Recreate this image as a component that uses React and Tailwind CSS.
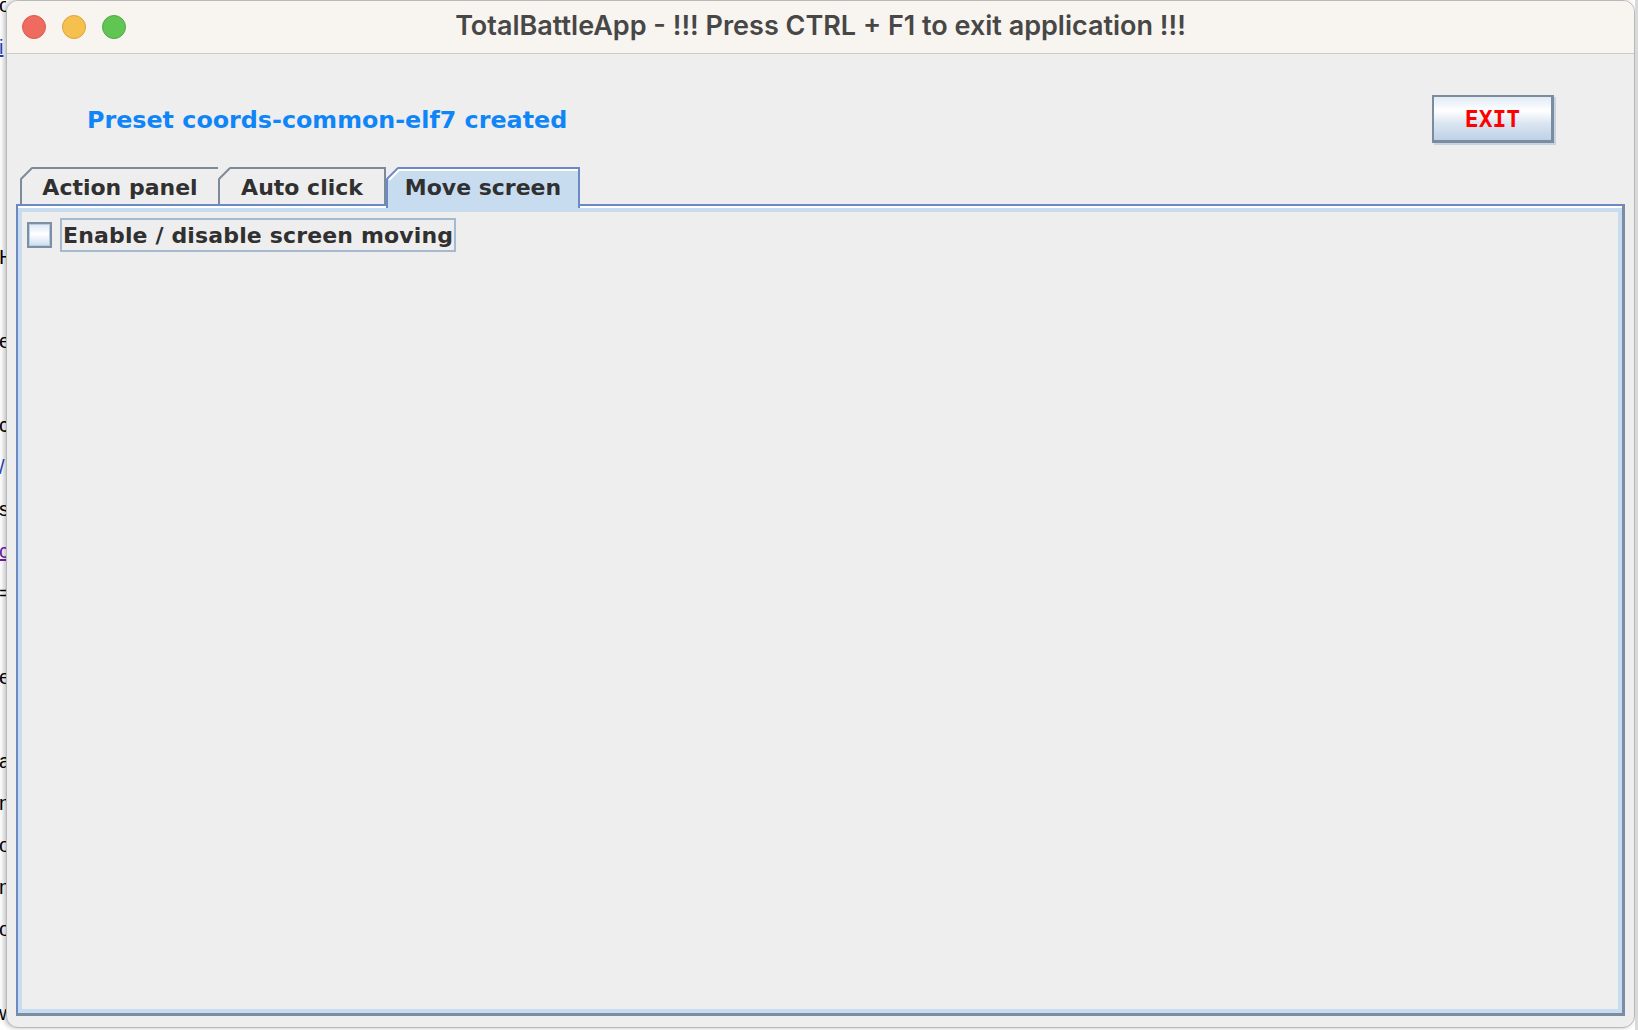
import React from 'react';

const BACK_LINES = [
  { t: 'oc' },
  { t: 'i', c: 'text-[#1a3fb0] underline' },
  {}, {}, {}, {},
  { t: 'H' },
  {},
  { t: 'e' },
  {},
  { t: 'c' },
  { t: '/', c: 'text-[#1a3fb0]' },
  { t: 's' },
  { t: 'c', c: 'text-[#6a1b9a] underline' },
  { t: '=' },
  {},
  { t: 'e' },
  {},
  { t: 'a' },
  { t: 'n' },
  { t: 'o' },
  { t: 'n' },
  { t: 'o' },
  {},
  { t: 'w' },
];

const sans = { fontFamily: '"DejaVu Sans", Verdana, sans-serif' };

// top-left chamfer drawn over the tab corner
const Chamfer = ({ stroke, inner }) => (
  <svg className="absolute -left-[2px] -top-[2px]" width="14" height="14" viewBox="0 0 14 14">
    <polygon points="0,0 12,0 0,12" fill="#eeeeee" />
    <line x1="1" y1="12" x2="12" y2="1" stroke={stroke} strokeWidth="2" />
    {inner && <line x1="3" y1="13" x2="13" y2="3" stroke="#ffffff" strokeWidth="2" />}
  </svg>
);

const Tab = ({ label, width, selected }) => {
  if (selected) {
    return (
      <div
        className={`relative z-10 -mb-[4px] flex h-[41px] flex-col border-2 border-b-0 border-[#6b8ac4] bg-[#c8dcf0] ${width}`}
      >
        <Chamfer stroke="#6b8ac4" inner />
        <div className="flex flex-1 items-start justify-center border-t-2 border-white pt-[4px] text-[22px] font-bold leading-[26px] text-[#303030]">
          {label}
        </div>
      </div>
    );
  }
  return (
    <div
      className={`relative flex h-[37px] items-start justify-center border-2 border-b-0 border-[#7d8a99] bg-[#eeeeee] pt-[6px] text-[22px] font-bold leading-[26px] text-[#303030] ${width}`}
    >
      <Chamfer stroke="#7d8a99" />
      {label}
    </div>
  );
};

export default function App() {
  return (
    <div className="flex h-[1030px] w-[1638px] overflow-hidden bg-white">
      {/* page behind the window */}
      <div
        className="relative h-[1030px] w-[6px] shrink-0 overflow-hidden text-[20px] text-black"
        style={{ fontFamily: '"Liberation Sans", Arial, sans-serif' }}
      >
        <div className="-mt-[16px] flex flex-col">
          {BACK_LINES.map((l, i) => (
            <div key={i} className={`h-[42px] -ml-[1px] whitespace-nowrap leading-[42px] ${l.c || ''}`}>
              {l.t || '\u00a0'}
            </div>
          ))}
        </div>
      </div>

      {/* window */}
      <div className="flex h-[1028px] w-[1629px] shrink-0 flex-col overflow-hidden rounded-[12px] border border-[#b9b9b9] bg-[#eeeeee] shadow-[-2px_0_5px_rgba(0,0,0,0.25)]">
        <div className="grid h-[53px] shrink-0 grid-cols-[1fr_auto_1fr] items-center border-b border-[#cfcbc6] bg-[#f8f4ef]">
          <div className="flex items-center gap-[16px] pl-[15px]">
            <span className="h-[24px] w-[24px] rounded-full border border-[#dd5a4f] bg-[#ef6b5f]" />
            <span className="h-[24px] w-[24px] rounded-full border border-[#dba33c] bg-[#f6c04f]" />
            <span className="h-[24px] w-[24px] rounded-full border border-[#4fa944] bg-[#61c554]" />
          </div>
          <div
            className="-mt-[2px] text-[27px] font-semibold text-[#474747]"
            style={{ fontFamily: 'Inter, "Open Sans", sans-serif' }}
          >
            TotalBattleApp - !!! Press CTRL + F1 to exit application !!!
          </div>
          <div />
        </div>

        <div className="flex flex-1 flex-col pb-[11px]" style={sans}>
          <div className="flex h-[113px] shrink-0 items-center justify-between pl-[80px] pr-[80px] pt-[16px]">
            <div className="mt-[4px] text-[23.8px] font-bold text-[#0f85f7]">Preset coords-common-elf7 created</div>
            <button
              className="flex h-[48px] w-[122px] items-center justify-center border-2 border-[#7b8ca0] border-r-[3px] border-b-[3px] bg-[linear-gradient(to_bottom,#e2ebf5_0%,#ffffff_32%,#dae5f1_62%,#bed1e6_100%)] pt-[3px] text-[23px] font-bold text-[#ff0000] shadow-[2px_2px_0_#c5d3e2]"
              style={{ fontFamily: '"DejaVu Sans Mono", monospace' }}
            >
              EXIT
            </button>
          </div>

          <div className="flex flex-1 flex-col px-[9px]">
            <div className="ml-[4px] flex items-end">
              <Tab label="Action panel" width="w-[200px]" />
              <Tab label="Auto click" width="-ml-[2px] w-[168px]" />
              <Tab label="Move screen" width="w-[194px]" selected />
            </div>
            <div className="flex flex-1 flex-col border-2 border-t-[#6b8ac4] border-l-[#6b8ac4] border-r-[3px] border-b-[3px] border-r-[#7b8da3] border-b-[#7b8da3]">
              <div className="flex flex-1 flex-col border-t-2 border-white">
                <div className="flex-1 border-4 border-[#c8dcf0] bg-[#eeeeee] pl-[5px] pt-[6px]">
                  <div className="flex items-center">
                    <span className="flex h-[26px] w-[25px] items-center justify-center border-2 border-[#7c8fa5] bg-[#b7cce4]">
                      <span className="h-[20px] w-[19px] bg-[linear-gradient(to_bottom,#dfe9f5_0%,#ffffff_45%,#d2e0f0_100%)]" />
                    </span>
                    <label className="ml-[8px] flex h-[34px] items-center border-2 border-[#a5b9d0] px-[1px] text-[22px] font-bold tracking-[0.15px] text-[#303030]">
                      Enable / disable screen moving
                    </label>
                  </div>
                </div>
              </div>
            </div>
          </div>
        </div>
      </div>

      <div className="h-[1030px] w-[3px] shrink-0 bg-[#d9d9d9]" />
    </div>
  );
}
